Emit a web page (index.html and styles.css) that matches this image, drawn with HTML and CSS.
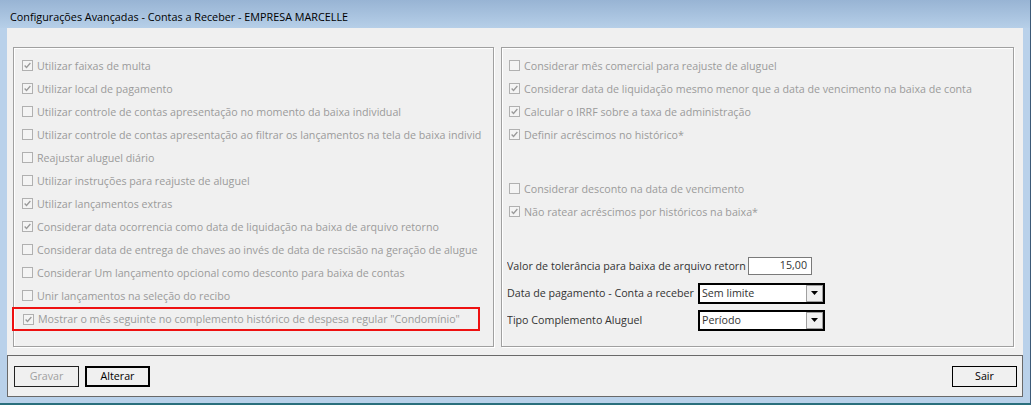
FILE: index.html
```html
<!DOCTYPE html>
<html>
<head>
  <title>Configurações Avançadas - Contas a Receber</title>
  <meta http-equiv="Content-Type" content="text/html; charset=UTF-8" />
  <link rel="stylesheet" href="styles.css">
</head>
<body>
  <div class="window">
    <div class="titlebar">Configurações Avançadas - Contas a Receber - EMPRESA MARCELLE</div>
    <div class="client">
      <div class="panels">
        <div class="group group-left">
          <div class="check on"><span class="box"><svg viewBox="0 0 11 11"><path d="M2 5.5 L4.3 8 L9 2.5" /></svg></span>Utilizar faixas de multa</div>
          <div class="check on"><span class="box"><svg viewBox="0 0 11 11"><path d="M2 5.5 L4.3 8 L9 2.5" /></svg></span>Utilizar local de pagamento</div>
          <div class="check"><span class="box"></span>Utilizar controle de contas apresentação no momento da baixa individual</div>
          <div class="check"><span class="box"></span>Utilizar controle de contas apresentação ao filtrar os lançamentos na tela de baixa individ</div>
          <div class="check"><span class="box"></span>Reajustar aluguel diário</div>
          <div class="check"><span class="box"></span>Utilizar instruções para reajuste de aluguel</div>
          <div class="check on"><span class="box"><svg viewBox="0 0 11 11"><path d="M2 5.5 L4.3 8 L9 2.5" /></svg></span>Utilizar lançamentos extras</div>
          <div class="check on"><span class="box"><svg viewBox="0 0 11 11"><path d="M2 5.5 L4.3 8 L9 2.5" /></svg></span>Considerar data ocorrencia como data de liquidação na baixa de arquivo retorno</div>
          <div class="check"><span class="box"></span>Considerar data de entrega de chaves ao invés de data de rescisão na geração de alugue</div>
          <div class="check"><span class="box"></span>Considerar Um lançamento opcional como desconto para baixa de contas</div>
          <div class="check"><span class="box"></span>Unir lançamentos na seleção do recibo</div>
          <div class="check on highlight"><span class="box"><svg viewBox="0 0 11 11"><path d="M2 5.5 L4.3 8 L9 2.5" /></svg></span>Mostrar o mês seguinte no complemento histórico de despesa regular "Condomínio"</div>
        </div>
        <div class="group group-right">
          <div class="check"><span class="box"></span>Considerar mês comercial para reajuste de aluguel</div>
          <div class="check on"><span class="box"><svg viewBox="0 0 11 11"><path d="M2 5.5 L4.3 8 L9 2.5" /></svg></span>Considerar data de liquidação mesmo menor que a data de vencimento na baixa de conta</div>
          <div class="check on"><span class="box"><svg viewBox="0 0 11 11"><path d="M2 5.5 L4.3 8 L9 2.5" /></svg></span>Calcular o IRRF sobre a taxa de administração</div>
          <div class="check on"><span class="box"><svg viewBox="0 0 11 11"><path d="M2 5.5 L4.3 8 L9 2.5" /></svg></span>Definir acréscimos no histórico*</div>
          <div class="check spaced"><span class="box"></span>Considerar desconto na data de vencimento</div>
          <div class="check on"><span class="box"><svg viewBox="0 0 11 11"><path d="M2 5.5 L4.3 8 L9 2.5" /></svg></span>Não ratear acréscimos por históricos na baixa*</div>

          <div class="fields">
            <div class="field">
              <span class="field-label wide">Valor de tolerância para baixa de arquivo retorn</span>
              <span class="textbox">15,00</span>
            </div>
            <div class="field">
              <span class="field-label">Data de pagamento - Conta a receber</span>
              <span class="combo">Sem limite<span class="combo-btn"><svg viewBox="0 0 7 4"><path d="M0 0 H7 L3.5 4 Z" /></svg></span></span>
            </div>
            <div class="field">
              <span class="field-label">Tipo Complemento Aluguel</span>
              <span class="combo">Período<span class="combo-btn"><svg viewBox="0 0 7 4"><path d="M0 0 H7 L3.5 4 Z" /></svg></span></span>
            </div>
          </div>
        </div>
      </div>
      <div class="toolbar">
        <button class="btn disabled">Gravar</button>
        <button class="btn focused">Alterar</button>
        <button class="btn btn-exit">Sair</button>
      </div>
    </div>
  </div>
</body>
</html>
```

FILE: styles.css
```css
body {
  margin: 0;
  font-family: "Open Sans", "Noto Sans", sans-serif;
  font-size: 10.7px;
  background-color: #b9d1ea;
}
.window {
  width: 1031px;
  height: 405px;
  box-sizing: border-box;
  background-color: #b9d1ea;
  border-right: 1px solid #3c5a78;
  border-bottom: 2px solid #2a6f7d;
  display: flex;
  flex-direction: column;
}
.titlebar {
  height: 28px;
  line-height: 34px;
  padding-left: 10px;
  font-size: 10.8px;
  color: #000;
  background: linear-gradient(#98b4d4, #b6cfe8);
  flex-shrink: 0;
}
.client {
  margin: 0 7px;
  height: 369px;
  background-color: #f0f0f0;
  display: flex;
  flex-direction: column;
}
.panels {
  display: flex;
  gap: 7px;
  padding: 19px 9px 0 6px;
  height: 300px;
}
.group {
  box-sizing: border-box;
  height: 300px;
  border: 1px solid #a0a0a0;
  box-shadow: inset 1px 1px 0 #fff, 1px 1px 0 #fff;
  padding: 6px 0 0 8px;
}
.group-left {
  width: 481px;
}
.group-right {
  width: 513px;
  padding-left: 7px;
}
.check {
  display: flex;
  align-items: center;
  height: 23px;
  color: #9b9b9b;
  white-space: nowrap;
  overflow: hidden;
}
.check.spaced {
  margin-top: 31px;
}
.box {
  width: 11px;
  height: 11px;
  box-sizing: border-box;
  border: 1px solid #b0b0b0;
  background-color: #f4f4f4;
  margin-right: 4px;
  flex-shrink: 0;
  display: flex;
}
.box svg {
  width: 9px;
  height: 9px;
}
.box path {
  fill: none;
  stroke: #9a9a9a;
  stroke-width: 1.6;
}
.highlight {
  margin-left: -10px;
  padding-left: 9px;
  width: 468px;
  height: 24px;
  box-sizing: border-box;
  border: 2px solid #ee1111;
  margin-top: 0;
}
.fields {
  margin-top: 32px;
  margin-left: -2px;
  display: flex;
  flex-direction: column;
  gap: 5px;
}
.field {
  display: flex;
  align-items: center;
  height: 22px;
  color: #333;
}
.field-label {
  width: 191px;
  overflow: hidden;
  white-space: nowrap;
}
.field-label.wide {
  width: 241px;
}
.textbox {
  width: 64px;
  height: 18px;
  box-sizing: border-box;
  border: 1px solid #7a7a7a;
  background-color: #fff;
  text-align: right;
  padding-right: 4px;
  line-height: 15px;
  color: #333;
}
.combo {
  position: relative;
  width: 127px;
  height: 21px;
  box-sizing: border-box;
  border: 2px solid #000;
  background-color: #fff;
  padding-left: 2px;
  line-height: 17px;
  color: #333;
}
.combo-btn {
  position: absolute;
  right: 0;
  top: 0;
  width: 17px;
  height: 17px;
  box-sizing: border-box;
  border: 1px solid #a0a0a0;
  background-color: #f0f0f0;
  display: flex;
  align-items: center;
  justify-content: center;
}
.combo-btn svg {
  width: 7px;
  height: 4px;
}
.combo-btn path {
  fill: #000;
}
.toolbar {
  margin-top: 8px;
  height: 42px;
  box-sizing: border-box;
  border: 1px solid #696969;
  display: flex;
  align-items: center;
  padding: 0 5px 0 6px;
  gap: 6px;
}
.btn {
  width: 65px;
  height: 21px;
  box-sizing: border-box;
  font-family: "Open Sans", "Noto Sans", sans-serif;
  font-size: 10.7px;
  background-color: #f0f0f0;
  border: 1px solid #000;
  padding: 0;
  color: #000;
}
.btn.disabled {
  color: #a0a0a0;
  border-color: #222;
}
.btn.focused {
  border: 2px solid #000;
}
.btn-exit {
  margin-left: auto;
}
```
